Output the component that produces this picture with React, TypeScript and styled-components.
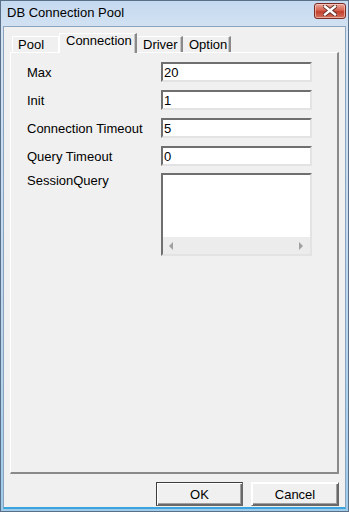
import React from "react";
import styled, { createGlobalStyle } from "styled-components";

const Global = createGlobalStyle`
  html, body { margin: 0; padding: 0; background: #ffffff; }
  body { width: 349px; height: 512px; overflow: hidden; }
  * { box-sizing: border-box; }
`;

const Window = styled.div`
  width: 349px;
  height: 512px;
  display: flex;
  flex-direction: column;
  border: 1px solid #5a6f88;
  background: linear-gradient(#c5d9ef, #d4e3f3 30px, #bcd6ee 60%, #9fcbea);
  font-family: "Liberation Sans", Arial, sans-serif;
  font-size: 13px;
  color: #000;
`;

const TitleBar = styled.div`
  height: 25px;
  flex: none;
  display: flex;
  align-items: center;
  justify-content: space-between;
  padding: 0 2px 2px 6px;
`;

const Title = styled.span`
  font-size: 13px;
  color: #000;
`;

const CloseButton = styled.div`
  width: 32px;
  height: 16px;
  margin-top: -4px;
  border: 1px solid #7a2b24;
  border-radius: 3px;
  background: linear-gradient(#e9a89c, #d6624f 45%, #c2402c 55%, #d3735f);
  display: flex;
  align-items: center;
  justify-content: center;
  box-shadow: inset 0 0 0 1px rgba(255, 220, 210, 0.55);
`;

const Client = styled.div`
  flex: 1;
  margin: 0 2px 2px 2px;
  background: #f0f0f0;
  border: 1px solid #8aa4bf;
  border-bottom: 2px solid #3aa4dc;
  display: flex;
  flex-direction: column;
  padding: 6px 6px 1px 6px;
`;

const TabStrip = styled.div`
  display: flex;
  align-items: flex-end;
  height: 19px;
  position: relative;
  z-index: 2;
`;

const Tab = styled.div<{ $w: number; $active?: boolean; $first?: boolean }>`
  width: ${(p) => p.$w}px;
  height: ${(p) => (p.$active ? 20 : 16)}px;
  margin-left: ${(p) => (p.$first ? 2 : 0)}px;
  margin-bottom: ${(p) => (p.$active ? -1 : 0)}px;
  background: #f0f0f0;
  border-top: 1px solid #ffffff;
  border-left: 1px solid ${(p) => (p.$active || p.$first ? "#ffffff" : "transparent")};
  border-right: ${(p) => (p.$first ? "1px solid #ffffff" : "2px solid #8a8a8a")};
  box-shadow: ${(p) => (p.$first ? "none" : "inset -1px 0 0 #c8c8c8")};
  padding-left: ${(p) => (p.$active ? 6 : 5)}px;
  padding-top: ${(p) => (p.$active ? 0 : 1)}px;
  line-height: 14px;
  font-size: 13px;
  white-space: nowrap;
`;

const Panel = styled.div`
  flex: 1;
  border-top: 1px solid #ffffff;
  border-left: 1px solid #ffffff;
  border-right: 2px solid #8a8a8a;
  border-bottom: 2px solid #8a8a8a;
  padding: 9px 0 0 16px;
`;

const Form = styled.div`
  display: grid;
  grid-template-columns: 134px 151px;
  grid-auto-rows: 20px;
  row-gap: 8px;
`;

const Label = styled.div<{ $top?: boolean }>`
  display: flex;
  align-items: ${(p) => (p.$top ? "flex-start" : "center")};
  padding-top: ${(p) => (p.$top ? 0 : 0)}px;
  margin-top: ${(p) => (p.$top ? -1 : 0)}px;
  white-space: nowrap;
  font-size: 13px;
`;

const Field = styled.div`
  background: #ffffff;
  border-top: 2px solid #6f6f6f;
  border-left: 2px solid #6f6f6f;
  border-right: 2px solid #e3e3e3;
  border-bottom: 2px solid #e3e3e3;
  font-size: 13px;
  line-height: 15px;
  padding-left: 1px;
  display: flex;
  align-items: center;
`;

const MemoBox = styled.div`
  margin-top: -1px;
  height: 83px;
  background: #ffffff;
  border-top: 2px solid #6f6f6f;
  border-left: 2px solid #6f6f6f;
  border-right: 2px solid #e3e3e3;
  border-bottom: 2px solid #e3e3e3;
  display: flex;
  flex-direction: column;
  justify-content: flex-end;
`;

const HScroll = styled.div`
  height: 17px;
  background: #ececec;
  display: flex;
  align-items: center;
  justify-content: space-between;
  padding: 0 7px 0 6px;
`;

const Arrow = styled.span<{ $dir: "left" | "right" }>`
  width: 0;
  height: 0;
  border-top: 4px solid transparent;
  border-bottom: 4px solid transparent;
  ${(p) =>
    p.$dir === "left"
      ? "border-right: 4px solid #a0a0a0;"
      : "border-left: 4px solid #a0a0a0;"}
`;

const ButtonRow = styled.div`
  display: flex;
  justify-content: flex-end;
  gap: 8px;
  padding: 8px 0 0 0;
  height: 32px;
  flex: none;
`;

const Button = styled.div<{ $w: number; $default?: boolean }>`
  width: ${(p) => p.$w}px;
  height: 24px;
  background: #f0f0f0;
  border: 1px solid ${(p) => (p.$default ? "#3c3c3c" : "#f0f0f0")};
  box-shadow: inset 1px 1px 0 #ffffff, inset -1px -1px 0 #696969,
    inset -2px -2px 0 #a0a0a0;
  border-top-color: ${(p) => (p.$default ? "#3c3c3c" : "#ffffff")};
  border-left-color: ${(p) => (p.$default ? "#3c3c3c" : "#ffffff")};
  border-right-color: #696969;
  border-bottom-color: #696969;
  display: flex;
  align-items: center;
  justify-content: center;
  font-size: 13px;
`;

const fields = [
  { label: "Max", value: "20" },
  { label: "Init", value: "1" },
  { label: "Connection Timeout", value: "5" },
  { label: "Query Timeout", value: "0" },
];

export default function App() {
  return (
    <>
      <Global />
      <Window>
        <TitleBar>
          <Title>DB Connection Pool</Title>
          <CloseButton>
            <svg width="14" height="11" viewBox="0 0 14 11">
              <path
                d="M2 1.5 L12 9.5 M12 1.5 L2 9.5"
                stroke="#5a2a24"
                strokeWidth="4.2"
                strokeLinecap="square"
              />
              <path
                d="M2 1.5 L12 9.5 M12 1.5 L2 9.5"
                stroke="#ffffff"
                strokeWidth="2.4"
                strokeLinecap="square"
              />
            </svg>
          </CloseButton>
        </TitleBar>
        <Client>
          <TabStrip>
            <Tab $w={47} $first>
              Pool
            </Tab>
            <Tab $w={78} $active>
              Connection
            </Tab>
            <Tab $w={46}>Driver</Tab>
            <Tab $w={48}>Option</Tab>
          </TabStrip>
          <Panel>
            <Form>
              {fields.map((f) => (
                <React.Fragment key={f.label}>
                  <Label>{f.label}</Label>
                  <Field>{f.value}</Field>
                </React.Fragment>
              ))}
              <Label $top>SessionQuery</Label>
              <MemoBox>
                <HScroll>
                  <Arrow $dir="left" />
                  <Arrow $dir="right" />
                </HScroll>
              </MemoBox>
            </Form>
          </Panel>
          <ButtonRow>
            <Button $w={87} $default>
              OK
            </Button>
            <Button $w={88}>Cancel</Button>
          </ButtonRow>
        </Client>
      </Window>
    </>
  );
}
